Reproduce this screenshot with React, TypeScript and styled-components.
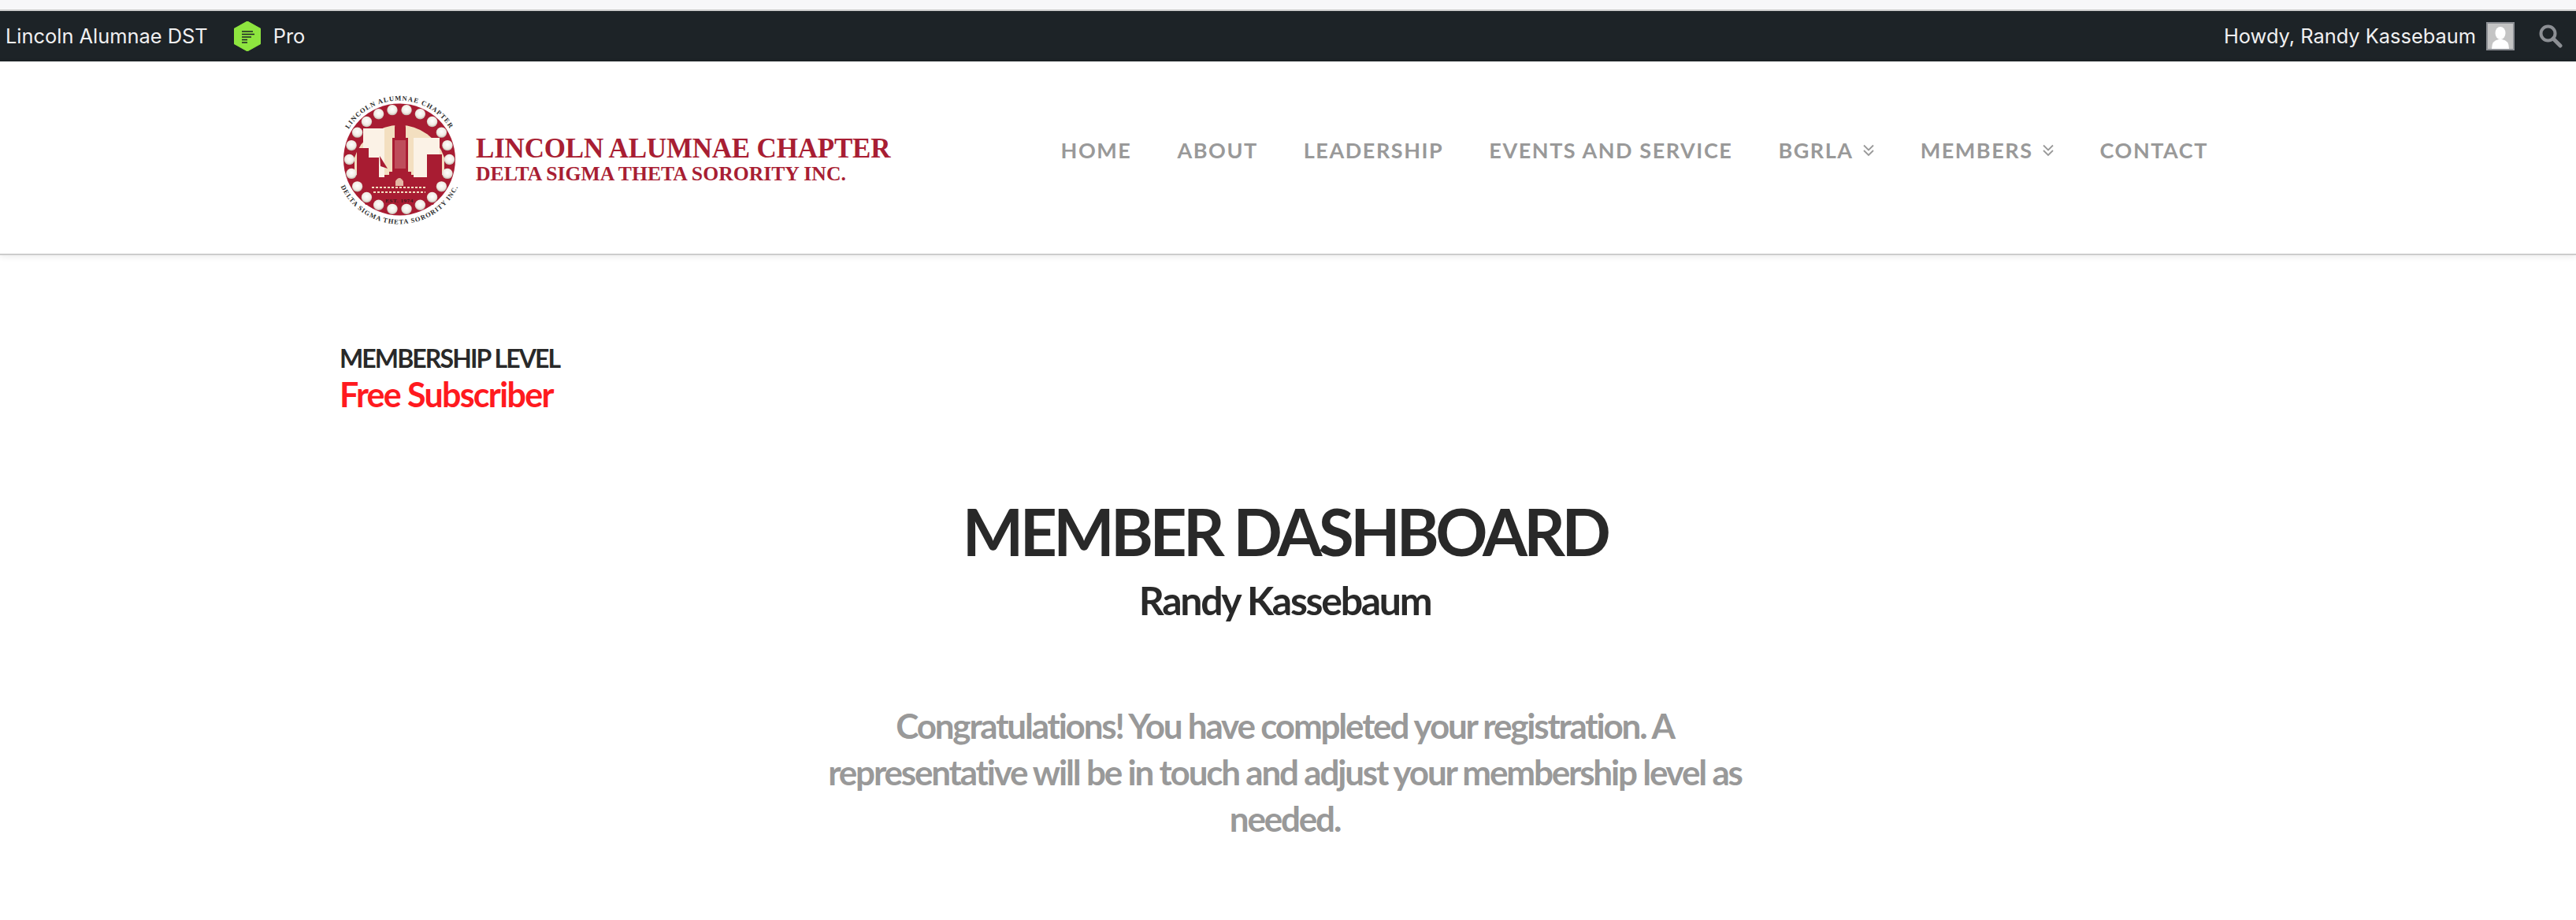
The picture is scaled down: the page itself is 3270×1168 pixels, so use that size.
import React from 'react';
import styled, { createGlobalStyle } from 'styled-components';

const NAV_ITEMS = [
  { label: 'HOME' },
  { label: 'ABOUT' },
  { label: 'LEADERSHIP' },
  { label: 'EVENTS AND SERVICE' },
  { label: 'BGRLA', hasMenu: true },
  { label: 'MEMBERS', hasMenu: true },
  { label: 'CONTACT' },
];

const PEARL_COUNT = 22;
const pearls = Array.from({ length: PEARL_COUNT }, (_, i) => {
  const angle = ((i + 0.5) / PEARL_COUNT) * Math.PI * 2;
  return { x: 87 + 63.5 * Math.sin(angle), y: 92.5 - 63.5 * Math.cos(angle) };
});

const Logo = () => (
  <svg width="180" height="180" viewBox="0 0 180 180">
    <defs>
      <path id="ringTop" d="M 12 92.5 A 75 75 0 0 1 162 92.5" />
      <path id="ringBottom" d="M 5 92.5 A 82 82 0 0 0 169 92.5" />
      <radialGradient id="pearl" cx="50%" cy="42%" r="60%">
        <stop offset="0%" stopColor="#ffffff" />
        <stop offset="65%" stopColor="#f1ece4" />
        <stop offset="100%" stopColor="#b9b2a8" />
      </radialGradient>
    </defs>
    <circle cx="87" cy="92.5" r="71" fill="#a81c32" />
    <path d="M30 90 A 60 60 0 0 1 144 90 L 144 112 L 30 112 Z" fill="#f3dfc0" />
    <rect x="41" y="53" width="27" height="62" fill="#fbf2e6" />
    <rect x="105" y="65" width="33" height="50" fill="#fbf2e6" />
    <path d="M33 78 H48 V90 H62 V115 H74 V108 H78 V65 H81 V52 Q81 45 87 43 V37 H89 V43 Q95 45 95 52 V65 H98 V108 H102 V115 H122 V86 H141 V125 L130 150 H44 L33 125 Z" fill="#a81c32" />
    <rect x="81" y="68" width="14" height="36" fill="#d98a8f" opacity="0.45" />
    <rect x="61" y="88" width="1.5" height="27" fill="#fbf2e6" />
    <path d="M62 88 L72 104 L63 101 Z" fill="#a81c32" />
    <path d="M52 128 H122 M54 134 H120" stroke="#f3dfc0" strokeWidth="2" strokeDasharray="3 2" />
    <path d="M82 120 Q87 112 92 120 V126 H82 Z" fill="#f3dfc0" opacity="0.8" />
    <text x="87" y="147" textAnchor="middle" fontFamily="'Liberation Serif', serif" fontSize="7" fontWeight="700" letterSpacing="0.6" fill="#3a1a1a">EST. 1974</text>
    {pearls.map((p, i) => (
      <circle key={i} cx={p.x} cy={p.y} r="6.7" fill="url(#pearl)" />
    ))}
    <text fontFamily="'Liberation Serif', serif" fontSize="8.5" fontWeight="700" letterSpacing="1.1" fill="#2b2b2b">
      <textPath href="#ringTop" startOffset="50%" textAnchor="middle">LINCOLN ALUMNAE CHAPTER</textPath>
    </text>
    <text fontFamily="'Liberation Serif', serif" fontSize="8.5" fontWeight="700" letterSpacing="1" fill="#2b2b2b">
      <textPath href="#ringBottom" startOffset="50%" textAnchor="middle">DELTA SIGMA THETA SORORITY INC.</textPath>
    </text>
  </svg>
);

const ProBadge = () => (
  <svg width="34" height="38" viewBox="0 0 34 38">
    <path d="M17 0 L34 9.5 V28.5 L17 38 L0 28.5 V9.5 Z" fill="#8ee53f" stroke="#8ee53f" strokeLinejoin="round" />
    <path d="M10 13 H24 M10 16.5 H26 M10 20 H22 M10 23.5 H17 M10 27 H17" stroke="#1d2327" strokeWidth="1.6" />
  </svg>
);

const SearchIcon = () => (
  <svg width="30" height="30" viewBox="0 0 30 30" fill="none" stroke="#8c8f94">
    <circle cx="11.5" cy="11.5" r="9" strokeWidth="4" />
    <path d="M18 18 L27 27" strokeWidth="5" strokeLinecap="round" />
  </svg>
);

const AvatarIcon = () => (
  <svg width="32" height="32" viewBox="0 0 32 32">
    <rect width="32" height="32" fill="#c4c4c4" />
    <ellipse cx="16" cy="12" rx="6.5" ry="8" fill="#fff" />
    <path d="M5 32 Q5 21 14 20 H18 Q27 21 27 32 Z" fill="#fff" />
  </svg>
);

const MenuChevrons = () => (
  <svg width="16" height="16" viewBox="0 0 16 16" fill="none" stroke="#999" strokeWidth="1.8">
    <path d="M2 1.5 L8 7.5 L14 1.5 M2 8 L8 14 L14 8" />
  </svg>
);

export default function App(): React.ReactElement {
  return (
    <>
      <GlobalStyle />
      <TopStrip />
      <AdminBar>
        <AdminGroup>
          <AdminText>Lincoln Alumnae DST</AdminText>
          <ProItem>
            <ProBadge />
            <AdminText>Pro</AdminText>
          </ProItem>
        </AdminGroup>
        <AdminGroup>
          <AdminText>Howdy, Randy Kassebaum</AdminText>
          <Avatar>
            <AvatarIcon />
          </Avatar>
          <SearchButton>
            <SearchIcon />
          </SearchButton>
        </AdminGroup>
      </AdminBar>
      <Header>
        <Brand>
          <Logo />
          <BrandText>
            <BrandTitle>LINCOLN ALUMNAE CHAPTER</BrandTitle>
            <BrandSubtitle>DELTA SIGMA THETA SORORITY INC.</BrandSubtitle>
          </BrandText>
        </Brand>
        <Nav>
          {NAV_ITEMS.map((item) => (
            <NavItem key={item.label}>
              {item.label}
              {item.hasMenu && <MenuChevrons />}
            </NavItem>
          ))}
        </Nav>
      </Header>
      <Main>
        <MembershipLabel>MEMBERSHIP LEVEL</MembershipLabel>
        <MembershipValue>Free Subscriber</MembershipValue>
        <Dashboard>
          <DashboardTitle>MEMBER DASHBOARD</DashboardTitle>
          <MemberName>Randy Kassebaum</MemberName>
          <Message>
            Congratulations! You have completed your registration. A representative will be in
            touch and adjust your membership level as needed.
          </Message>
        </Dashboard>
      </Main>
    </>
  );
}

const GlobalStyle = createGlobalStyle`
  html, body {
    margin: 0;
    background: #fff;
    height: 1168px;
    overflow: hidden;
  }
  * {
    box-sizing: border-box;
  }
`;

const TopStrip = styled('div')`
  background: #f7f7f9;
  border-bottom: 2px solid #ccc;
  height: 14px;
`;

const AdminBar = styled('div')`
  align-items: center;
  background: #1d2327;
  display: flex;
  height: 64px;
  justify-content: space-between;
  padding: 0 17px 0 7px;
`;

const AdminGroup = styled('div')`
  align-items: center;
  display: flex;
`;

const AdminText = styled('span')`
  color: #f0f0f1;
  font-family: 'Inter', sans-serif;
  font-size: 25.4px;
  line-height: 32px;
`;

const ProItem = styled('div')`
  align-items: center;
  display: flex;
  gap: 16px;
  margin-left: 33px;
`;

const Avatar = styled('div')`
  border: 2px solid #8c8f94;
  display: flex;
  height: 36px;
  margin-left: 13px;
  width: 36px;
`;

const SearchButton = styled('div')`
  display: flex;
  margin-left: 31px;
`;

const Header = styled('header')`
  align-items: center;
  background: #fff;
  border-bottom: 2px solid #ccc;
  box-shadow: 0 2px 8px rgba(0, 0, 0, 0.08);
  display: flex;
  height: 246px;
  justify-content: space-between;
  padding: 0 467px 0 420px;
  position: relative;
`;

const Brand = styled('div')`
  align-items: center;
  display: flex;
  gap: 4px;
`;

const BrandText = styled('div')`
  color: #a81e33;
  display: flex;
  flex-direction: column;
  font-family: 'Liberation Serif', serif;
  font-weight: 700;
  padding-top: 6px;
`;

const BrandTitle = styled('div')`
  font-size: 35px;
  letter-spacing: -0.2px;
  line-height: 36px;
  white-space: nowrap;
`;

const BrandSubtitle = styled('div')`
  font-size: 25.7px;
  line-height: 28px;
  white-space: nowrap;
`;

const Nav = styled('nav')`
  display: flex;
  gap: 58px;
  padding-bottom: 19px;
`;

const NavItem = styled('div')`
  align-items: center;
  color: #999;
  display: flex;
  font-family: 'Lato', sans-serif;
  font-size: 27px;
  font-weight: 700;
  gap: 11px;
  letter-spacing: 1.55px;
  white-space: nowrap;
`;

const Main = styled('main')`
  font-family: 'Lato', sans-serif;
  padding: 112px 439px 0 431px;
`;

const MembershipLabel = styled('div')`
  color: #292929;
  font-size: 32px;
  font-weight: 700;
  letter-spacing: -1.9px;
  line-height: 38px;
`;

const MembershipValue = styled('div')`
  color: #ff1a1f;
  font-size: 43px;
  font-weight: 700;
  letter-spacing: -1.7px;
  line-height: 50px;
  margin-top: 2px;
`;

const Dashboard = styled('section')`
  align-items: center;
  display: flex;
  flex-direction: column;
  margin-top: 98px;
  text-align: center;
`;

const DashboardTitle = styled('h1')`
  color: #292929;
  font-size: 82px;
  font-weight: 700;
  letter-spacing: -4.6px;
  line-height: 100px;
  margin: 0;
`;

const MemberName = styled('h2')`
  color: #292929;
  font-size: 50px;
  font-weight: 700;
  letter-spacing: -2.3px;
  line-height: 68px;
  margin: 4px 0 -4px;
`;

const Message = styled('p')`
  color: #999;
  font-size: 44px;
  font-weight: 700;
  letter-spacing: -2.2px;
  line-height: 59px;
  margin: 100px 0 0;
  width: 1200px;
`;
